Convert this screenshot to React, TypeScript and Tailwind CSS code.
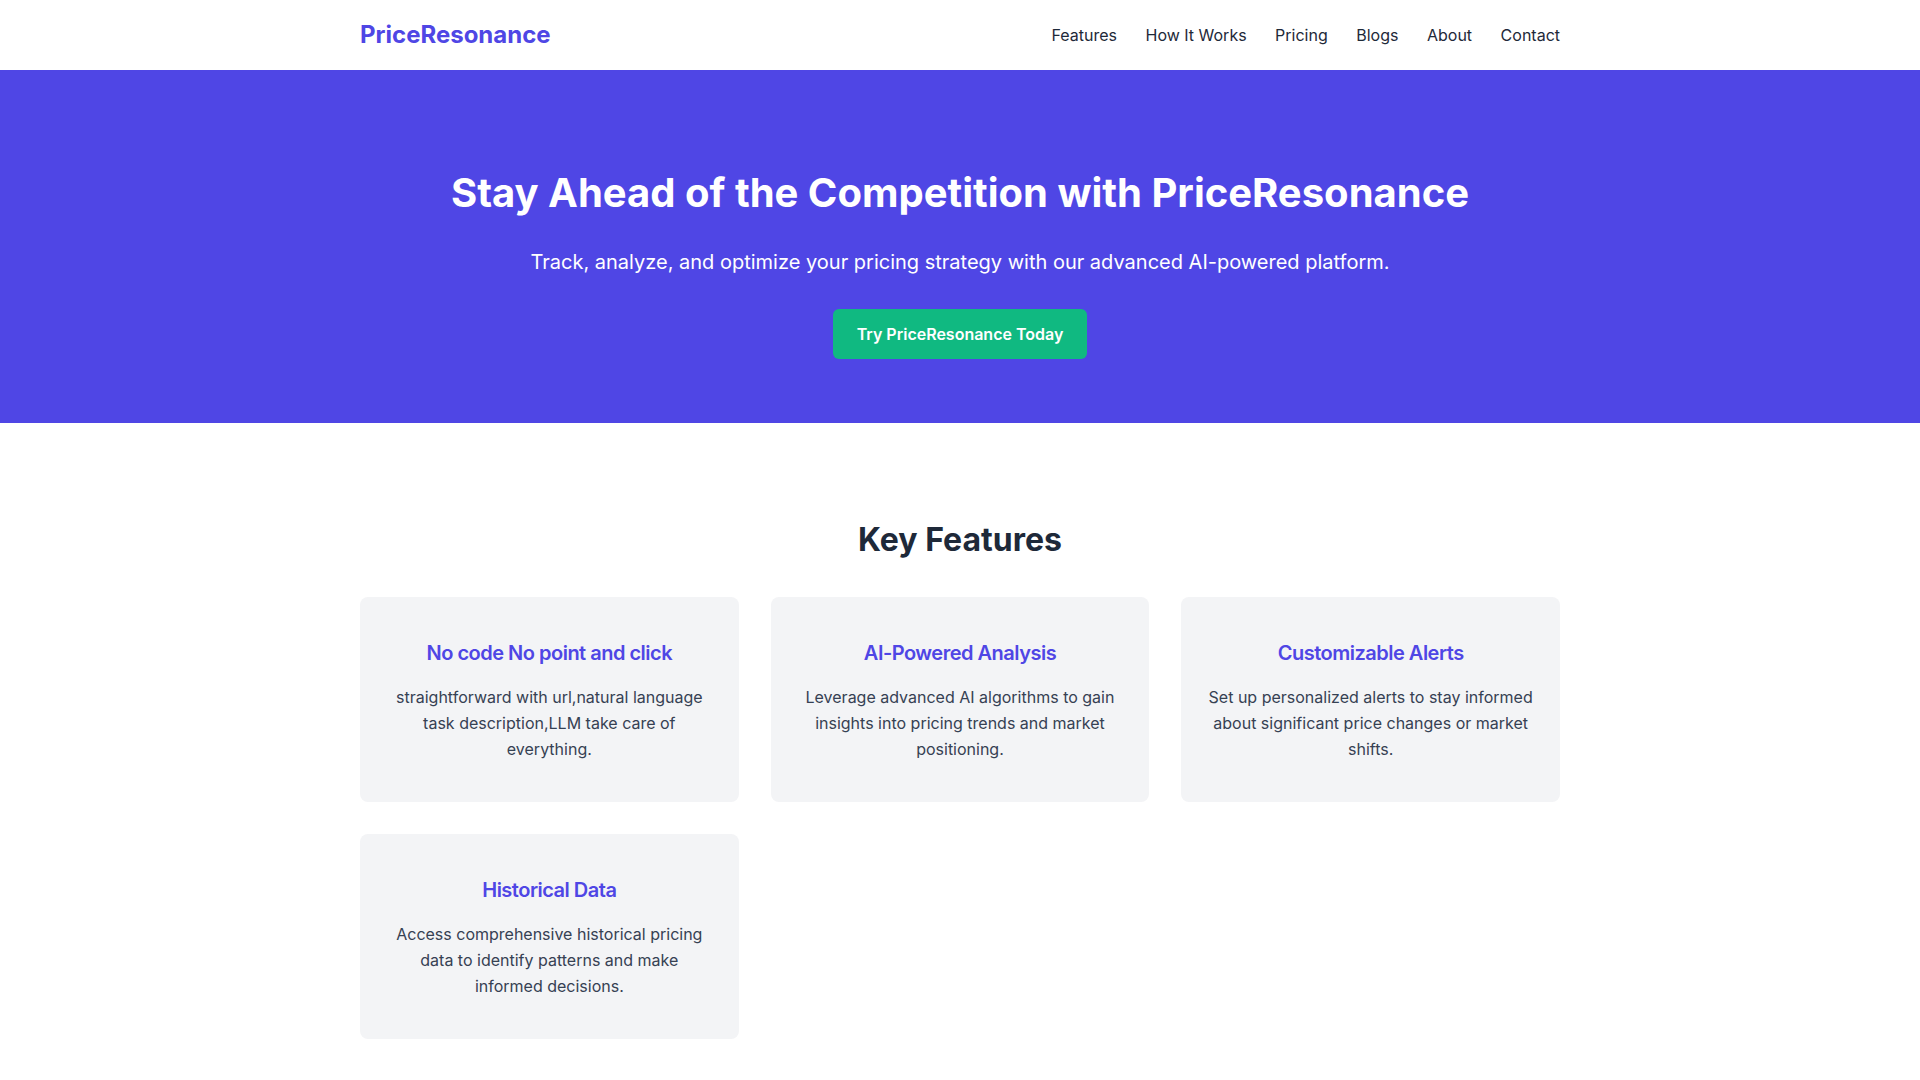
import React from "react";

const features = [
  {
    title: "No code No point and click",
    body: "straightforward with url,natural language task description,LLM take care of everything.",
  },
  {
    title: "AI-Powered Analysis",
    body: "Leverage advanced AI algorithms to gain insights into pricing trends and market positioning.",
  },
  {
    title: "Customizable Alerts",
    body: "Set up personalized alerts to stay informed about significant price changes or market shifts.",
  },
  {
    title: "Historical Data",
    body: "Access comprehensive historical pricing data to identify patterns and make informed decisions.",
  },
];

const nav = ["Features", "How It Works", "Pricing", "Blogs", "About", "Contact"];

export default function App() {
  return (
    <div className="min-h-screen bg-white font-['Inter','Noto_Sans',sans-serif] text-gray-800">
      <header className="bg-white">
        <div className="mx-auto flex h-[70px] w-[1200px] items-center justify-between">
          <a className="text-2xl font-bold text-[#4f46e5]">PriceResonance</a>
          <nav className="flex items-center gap-[28.5px] text-base text-gray-800">
            {nav.map((n) => (
              <a key={n} className="cursor-pointer">
                {n}
              </a>
            ))}
          </nav>
        </div>
      </header>

      <section className="bg-[#4f46e5] pt-[99px] pb-16 text-center text-white">
        <h1 className="mb-[31px] text-[40px] leading-[48px] font-bold">
          Stay Ahead of the Competition with PriceResonance
        </h1>
        <p className="mb-[33px] text-xl">
          Track, analyze, and optimize your pricing strategy with our advanced AI-powered platform.
        </p>
        <button className="rounded-md bg-[#10b981] px-6 py-[13px] text-base font-semibold text-white">
          Try PriceResonance Today
        </button>
      </section>

      <section className="pt-[97px] pb-16">
        <div className="mx-auto w-[1200px]">
          <h2 className="mb-[37px] text-center text-[32px] leading-[40px] font-bold text-gray-800">
            Key Features
          </h2>
          <div className="grid grid-cols-3 gap-8">
            {features.map((f) => (
              <div key={f.title} className="rounded-lg bg-[#f3f4f6] px-[26px] pt-[42px] pb-10 text-center">
                <h3 className="mb-[17px] text-xl font-semibold tracking-tight text-[#4f46e5]">{f.title}</h3>
                <p className="text-base leading-relaxed text-gray-700">{f.body}</p>
              </div>
            ))}
          </div>
        </div>
      </section>
    </div>
  );
}
